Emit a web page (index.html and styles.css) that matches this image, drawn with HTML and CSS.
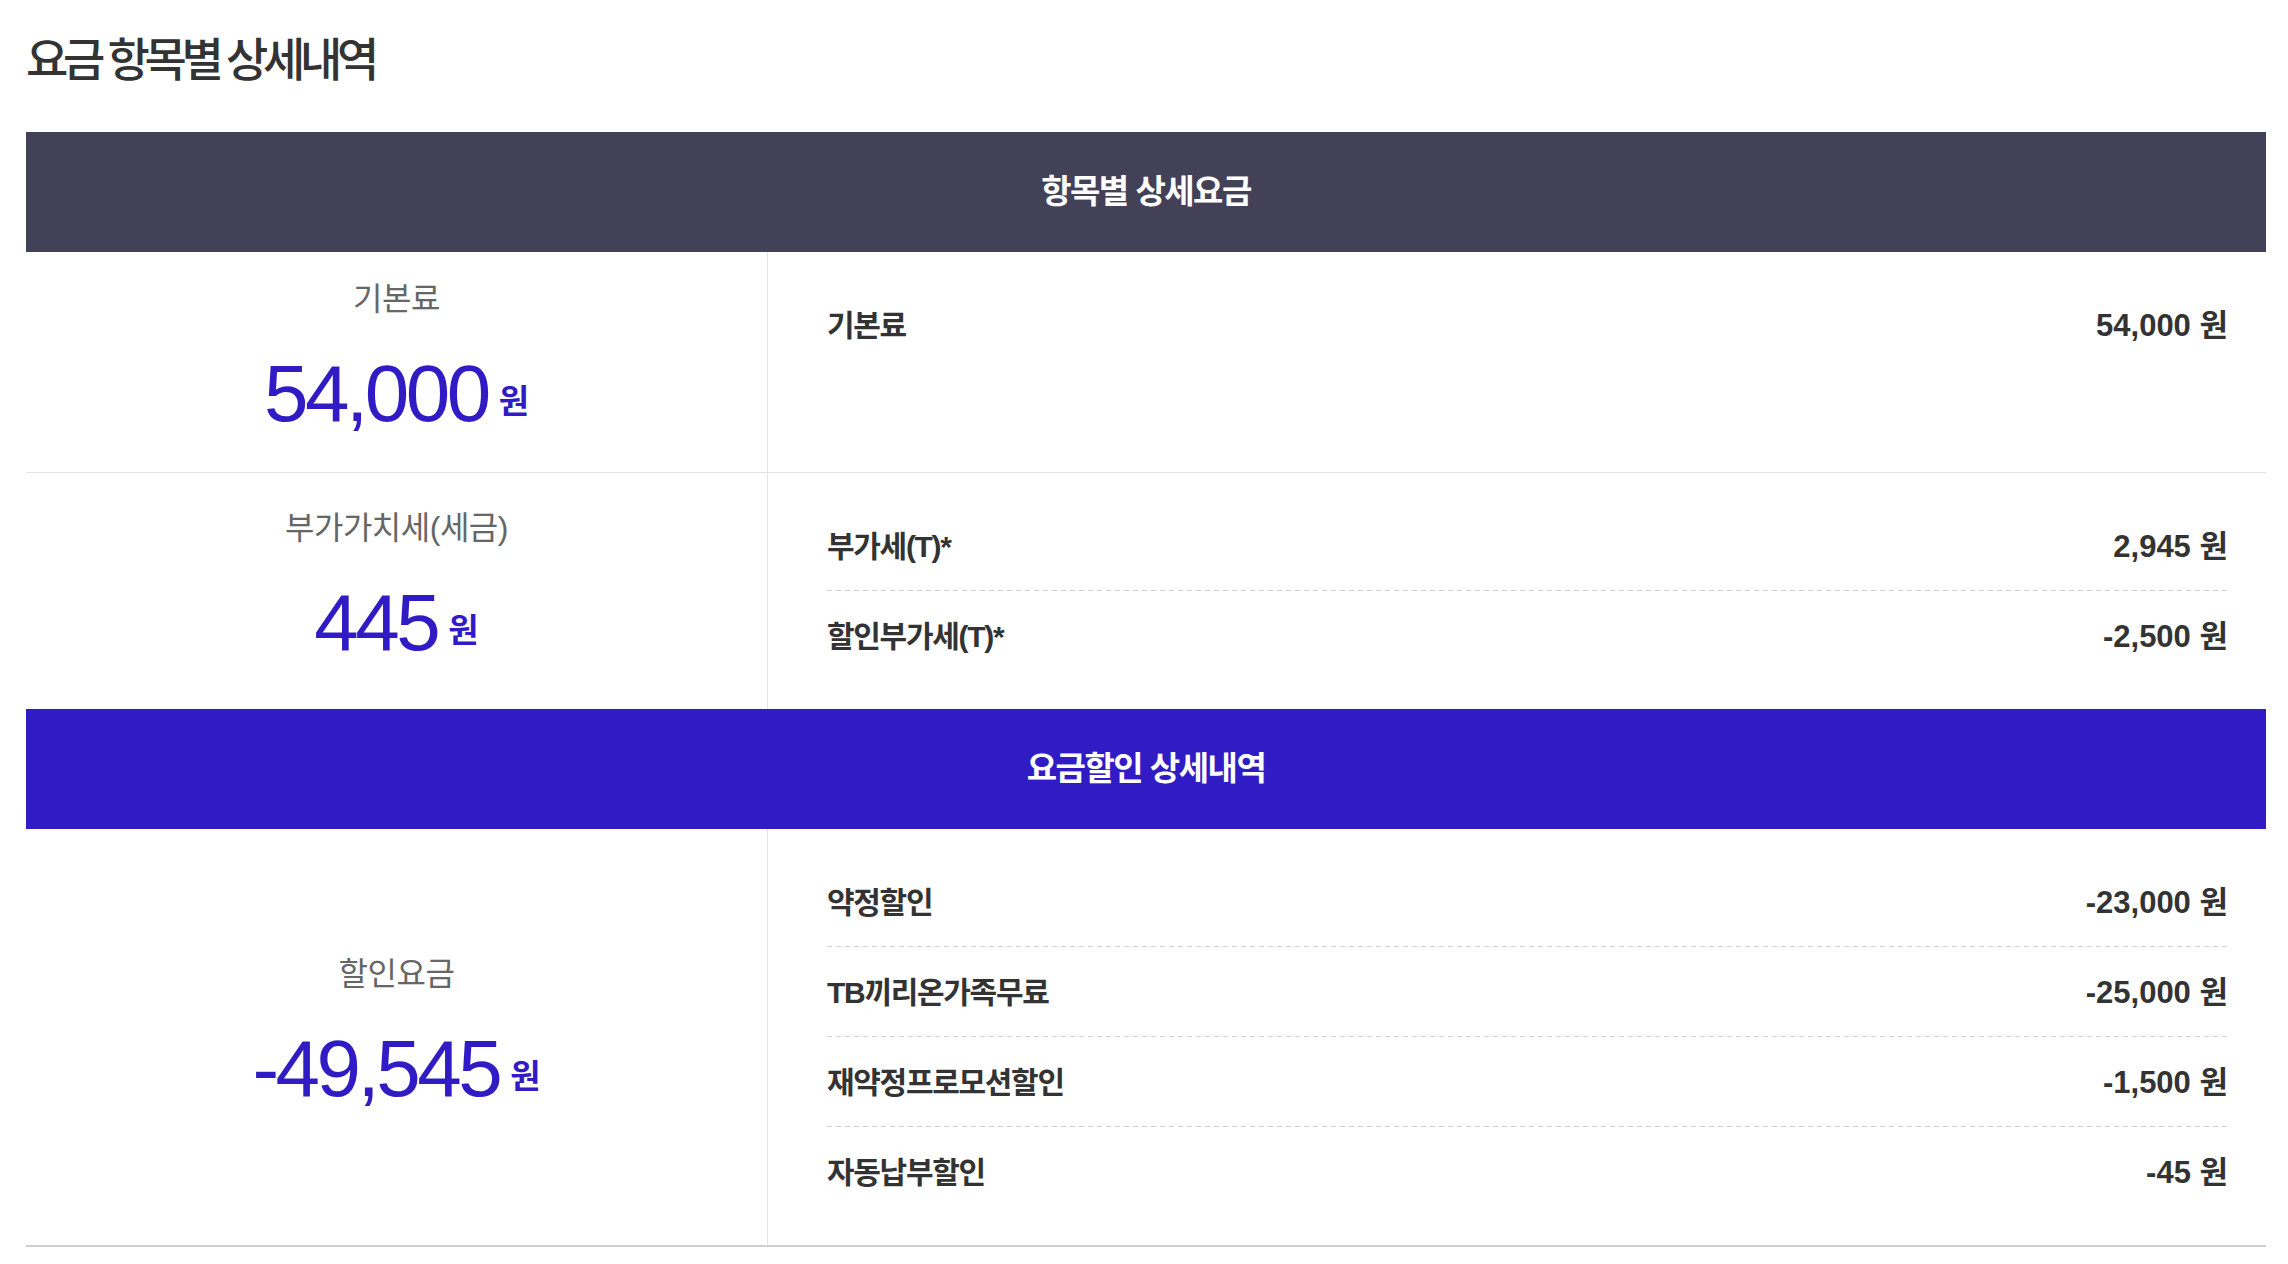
FILE: index.html
```html
<!DOCTYPE html>
<html lang="ko">
<head>
  <meta charset="UTF-8" />
  <meta name="viewport" content="width=device-width, initial-scale=1.0"/>
  <title>요금 항목별 상세내역</title>
  <link rel="stylesheet" href="styles.css">
</head>

<body>
  <div class="bill">
    <h2 class="bill-title">요금 항목별 상세내역</h2>

    <div class="bill-table">
      <div class="bar bar-dark">항목별 상세요금</div>

      <div class="row">
        <div class="summary">
          <p class="summary-label">기본료</p>
          <p class="summary-amount"><span class="num">54,000</span><span class="unit">원</span></p>
        </div>
        <ul class="items">
          <li><span class="item-name">기본료</span><span class="item-price">54,000 원</span></li>
        </ul>
      </div>

      <div class="row row-open">
        <div class="summary">
          <p class="summary-label">부가가치세(세금)</p>
          <p class="summary-amount"><span class="num">445</span><span class="unit">원</span></p>
        </div>
        <ul class="items">
          <li><span class="item-name">부가세(T)*</span><span class="item-price">2,945 원</span></li>
          <li><span class="item-name">할인부가세(T)*</span><span class="item-price">-2,500 원</span></li>
        </ul>
      </div>

      <div class="bar bar-blue">요금할인 상세내역</div>

      <div class="row row-last">
        <div class="summary">
          <p class="summary-label">할인요금</p>
          <p class="summary-amount"><span class="num">-49,545</span><span class="unit">원</span></p>
        </div>
        <ul class="items">
          <li><span class="item-name">약정할인</span><span class="item-price">-23,000 원</span></li>
          <li><span class="item-name">TB끼리온가족무료</span><span class="item-price">-25,000 원</span></li>
          <li><span class="item-name">재약정프로모션할인</span><span class="item-price">-1,500 원</span></li>
          <li><span class="item-name">자동납부할인</span><span class="item-price">-45 원</span></li>
        </ul>
      </div>
    </div>
  </div>
</body>
</html>
```

FILE: styles.css
```css
* { box-sizing: border-box; margin: 0; padding: 0; }
body {
  font-family: "Liberation Sans", "Noto Sans CJK KR", sans-serif;
  background: #fff; color: #333;
}
.bill { padding: 0 22px 0 26px; }
.bill-title {
  font-size: 46px; font-weight: 500; letter-spacing: -5.3px;
  line-height: 60px; margin: 30px 0 42px; color: #333;
}

/* section bars */
.bar {
  height: 120px; display: flex; align-items: center; justify-content: center;
  padding-bottom: 7px;
  color: #fff; font-size: 33px; font-weight: 700; letter-spacing: -1.5px;
}
.bar-dark { background: #434157; }
.bar-blue { background: #311bc5; }

/* rows */
.row {
  display: grid; grid-template-columns: 741px 1fr;
  border-bottom: 1px solid #e3e3e3;
}
.row-open { border-bottom: none; }
.row-last { border-bottom: 2px solid #cfcfcf; }

.summary {
  display: flex; flex-direction: column; justify-content: center; align-items: center;
  padding: 25px 0 30px;
}
.summary-label {
  height: 44px; font-size: 32px; line-height: 44px; letter-spacing: -0.5px; color: #666;
}
.summary-amount {
  height: 96px; margin-top: 25px; line-height: 96px;
  color: #311bc5; white-space: nowrap;
}
.num { font-size: 80px; letter-spacing: -3.5px; }
.unit {
  font-size: 33px; font-weight: 700; line-height: 1;
  margin-left: 11px; vertical-align: 8px;
}

.items {
  list-style: none; border-left: 1px solid #e3e3e3;
  padding: 28px 38px 28px 59px;
}
.items li {
  height: 90px; display: flex; align-items: center; justify-content: space-between;
  padding-bottom: 5px;
  background: repeating-linear-gradient(90deg, #d2d2d2 0 5px, transparent 5px 9px) left bottom / 100% 1px no-repeat;
}
.items li:last-child { background: none; }
.item-name { font-size: 30px; font-weight: 700; letter-spacing: -1.3px; }
.item-price { font-size: 31px; font-weight: 700; }
```
